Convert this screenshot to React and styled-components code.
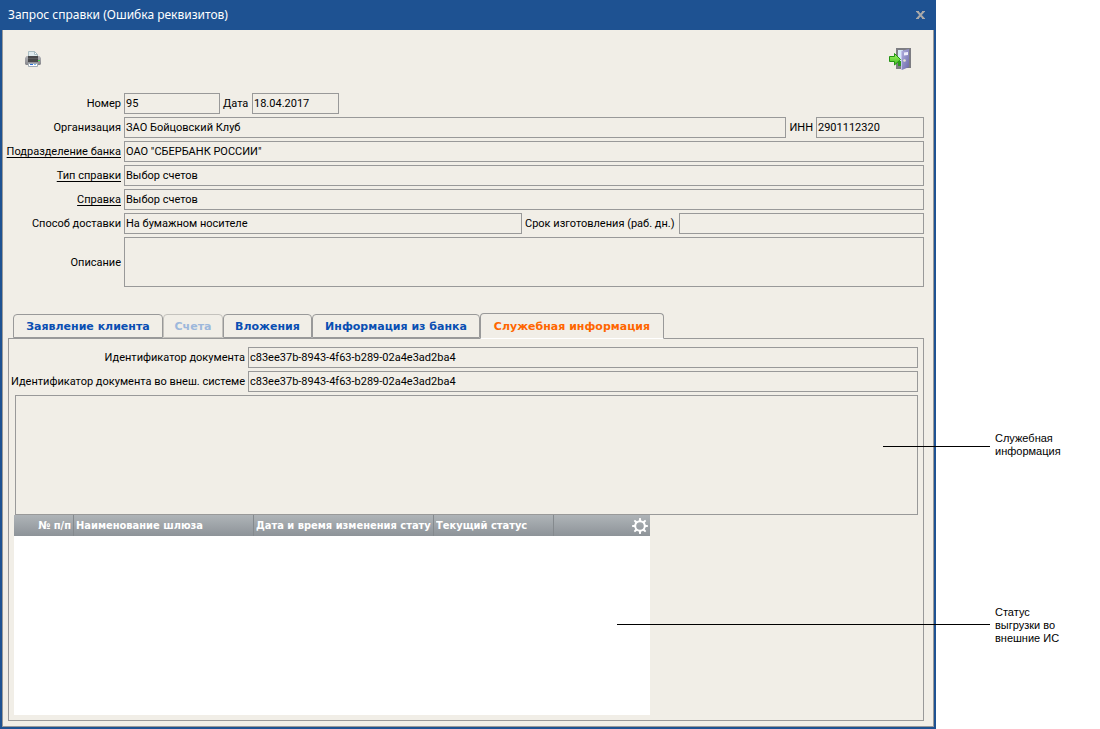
import React, { useState } from 'react';
import styled, { createGlobalStyle } from 'styled-components';

const tabs = [
  { id: 'claim', title: 'Заявление клиента', width: 150 },
  { id: 'accounts', title: 'Счета', width: 60, disabled: true },
  { id: 'files', title: 'Вложения', width: 89 },
  { id: 'bank', title: 'Информация из банка', width: 168 },
  { id: 'service', title: 'Служебная информация', width: 184 },
];

const columns = [
  { title: '№ п/п', width: 60, align: 'right' },
  { title: 'Наименование шлюза', width: 180 },
  { title: 'Дата и время изменения статуса', width: 180 },
  { title: 'Текущий статус', width: 120 },
];

function PrinterIcon() {
  return (
    <svg width="16" height="16" viewBox="0 0 16 16" aria-hidden="true">
      <defs>
        <linearGradient id="printerBody" x1="0" y1="0" x2="0" y2="1">
          <stop offset="0" stopColor="#b4b4b8" />
          <stop offset="1" stopColor="#85858a" />
        </linearGradient>
      </defs>
      <path d="M3.5 6V.5h6l3 3V6z" fill="#dfeaee" stroke="#a9bcc2" />
      <path d="M9.5.5v3h3z" fill="#fff" stroke="#a9bcc2" />
      <path d="M1.5 5h13L16 7v6l-1 1H1l-1-1V7z" fill="url(#printerBody)" />
      <path d="M3 5h10v6H3z" fill="#48484b" />
      <path d="M3 7h10v1H3z" fill="#5d5d60" />
      <path d="M13 9h2v1h-2z" fill="#35e03b" />
      <path d="M3.500 12.500h9v3h-9z" fill="#fff" stroke="#a3adb5" />
      <path d="M5 13h3v1H5z" fill="#2e6fd8" />
      <path d="M9 13h2v1H9z" fill="#7db4ef" />
    </svg>
  );
}

function ExitIcon() {
  return (
    <svg width="22" height="22" viewBox="0 0 22 22" aria-hidden="true">
      <defs>
        <linearGradient id="doorLeaf" x1="0" y1="0" x2="1" y2="1">
          <stop offset="0" stopColor="#b3b2e2" />
          <stop offset="1" stopColor="#6c6aa8" />
        </linearGradient>
        <linearGradient id="arrowFill" x1="0" y1="0" x2="0" y2="1">
          <stop offset="0" stopColor="#a4f569" />
          <stop offset="1" stopColor="#3fc01c" />
        </linearGradient>
      </defs>
      <path d="M7 0h15v20h-8v1H7z" fill="#7d7d82" />
      <path d="M9 2h5v16H9z" fill="#d6eaf8" />
      <path d="M9 13h4v5H9z" fill="#2c9a1c" />
      <path d="M12 3l8-2v18l-7 3-1-1z" fill="url(#doorLeaf)" />
      <path d="M12.500 3v18.500" stroke="#c3c2ea" />
      <path d="M15 4.500l4-.5v3l-4 .5z" fill="#eeeefb" />
      <circle cx="15.500" cy="12.500" r="1.300" fill="#e9e6d2" />
      <path d="M.5 8.500h5v-3l6 6-6 5.500v-3.500h-5z" fill="url(#arrowFill)" stroke="#239313" />
    </svg>
  );
}

function GearIcon() {
  return (
    <svg width="16" height="16" viewBox="0 0 16 16" aria-hidden="true">
      <circle cx="8" cy="8" r="4.800" fill="none" stroke="#fff" strokeWidth="2" />
      {[0, 45, 90, 135, 180, 225, 270, 315].map((angle) => (
        <path key={angle} d="M6.800 3L7.200 0h1.600l.4 3z" fill="#fff" transform={`rotate(${angle} 8 8)`} />
      ))}
    </svg>
  );
}

function App() {
  const [activeTab, setActiveTab] = useState('service');

  return (
    <>
      <GlobalStyle />
      <Page>
        <Dialog>
          <TitleBar>
            <Title>Запрос справки (Ошибка реквизитов)</Title>
            <CloseBtn type="button" aria-label="Закрыть">
              <svg width="9" height="8" viewBox="0 0 9 8" aria-hidden="true">
                <path d="M1 0l7 8M8 0L1 8" stroke="#a9a9a9" strokeWidth="2" />
                <path d="M0 .5h3M6 .5h3M0 7.500h3M6 7.500h3" stroke="#a9a9a9" />
              </svg>
            </CloseBtn>
          </TitleBar>
          <Body>
            <Toolbar>
              <IconBtn type="button" aria-label="Печать">
                <PrinterIcon />
              </IconBtn>
              <IconBtn type="button" aria-label="Выход">
                <ExitIcon />
              </IconBtn>
            </Toolbar>

            <Form>
              <Row>
                <Label htmlFor="number">Номер</Label>
                <Field id="number" $width={96} defaultValue="95" readOnly />
                <InlineLabel htmlFor="date" $width={26}>Дата</InlineLabel>
                <Field id="date" $width={87} defaultValue="18.04.2017" readOnly />
              </Row>
              <Row>
                <Label htmlFor="org">Организация</Label>
                <Field id="org" defaultValue="ЗАО Бойцовский Клуб" readOnly />
                <InlineLabel htmlFor="inn">ИНН</InlineLabel>
                <Field id="inn" $width={108} defaultValue="2901112320" readOnly />
              </Row>
              <Row>
                <LinkLabel id="branchLabel" href="#branch">Подразделение банка</LinkLabel>
                <Field id="branch" aria-labelledby="branchLabel" defaultValue={'ОАО "СБЕРБАНК РОССИИ"'} readOnly />
              </Row>
              <Row>
                <LinkLabel id="typeLabel" href="#type">Тип справки</LinkLabel>
                <Field id="type" aria-labelledby="typeLabel" defaultValue="Выбор счетов" readOnly />
              </Row>
              <Row>
                <LinkLabel id="certLabel" href="#cert">Справка</LinkLabel>
                <Field id="cert" aria-labelledby="certLabel" defaultValue="Выбор счетов" readOnly />
              </Row>
              <Row>
                <Label htmlFor="delivery">Способ доставки</Label>
                <Field id="delivery" defaultValue="На бумажном носителе" readOnly />
                <InlineLabel htmlFor="term" $width={151}>Срок изготовления (раб. дн.)</InlineLabel>
                <Field id="term" $width={245} readOnly />
              </Row>
              <Row>
                <Label htmlFor="description">Описание</Label>
                <TextArea id="description" $height={50} readOnly />
              </Row>
            </Form>

            <TabList role="tablist">
              {tabs.map((tab) => (
                <Tab
                  key={tab.id}
                  type="button"
                  role="tab"
                  aria-selected={activeTab === tab.id}
                  disabled={tab.disabled}
                  $active={activeTab === tab.id}
                  $width={tab.width}
                  onClick={() => setActiveTab(tab.id)}
                >
                  {tab.title}
                </Tab>
              ))}
            </TabList>

            <Panel role="tabpanel">
              <Row>
                <Label htmlFor="docId" $width={232}>Идентификатор документа</Label>
                <Field id="docId" defaultValue="c83ee37b-8943-4f63-b289-02a4e3ad2ba4" readOnly />
              </Row>
              <Row>
                <Label htmlFor="extId" $width={232}>Идентификатор документа во внеш. системе</Label>
                <Field id="extId" defaultValue="c83ee37b-8943-4f63-b289-02a4e3ad2ba4" readOnly />
              </Row>
              <ServiceRow>
                <TextArea aria-label="Служебная информация" $height={120} readOnly />
              </ServiceRow>
              <TableBox>
                <Table>
                  <thead>
                    <tr>
                      {columns.map((col) => (
                        <HeadCell key={col.title} $width={col.width} $align={col.align}>
                          <HeadText>{col.title}</HeadText>
                        </HeadCell>
                      ))}
                      <GearCell>
                        <GearBtn type="button" aria-label="Настройки">
                          <GearIcon />
                        </GearBtn>
                      </GearCell>
                    </tr>
                  </thead>
                  <tbody />
                </Table>
              </TableBox>
            </Panel>
          </Body>
        </Dialog>

        <Notes>
          <Note $line={107} $top={14}>
            Служебная
            <br />
            информация
          </Note>
          <Note $line={373} $top={18}>
            Статус
            <br />
            выгрузки во
            <br />
            внешние ИС
          </Note>
        </Notes>
      </Page>
    </>
  );
}

export default App;

const GlobalStyle = createGlobalStyle`
  * {
    box-sizing: border-box;
  }

  body {
    margin: 0;
    background: #fff;
    color: #000;
    font: 11px/13px Roboto, 'Liberation Sans', sans-serif;
  }

  button, input, textarea {
    font: inherit;
    color: inherit;
  }
`;

const Page = styled.div`
  display: grid;
  grid-template-columns: minmax(0, 1fr) 164px;
  min-height: 100vh;
`;

const Dialog = styled.section`
  display: flex;
  flex-direction: column;
  border: 2px solid #1e5292;
  border-top: 0;
`;

const TitleBar = styled.header`
  display: flex;
  align-items: center;
  justify-content: space-between;
  height: 30px;
  padding: 0 8px 0 6px;
  background: #1e5292;
`;

const Title = styled.h1`
  margin: 0;
  color: #fff;
  font-family: 'Noto Sans', sans-serif;
  font-size: 12px;
  font-weight: 400;
  line-height: 18px;
`;

const CloseBtn = styled.button`
  display: flex;
  padding: 0 1px;
  border: 0;
  background: none;
  cursor: pointer;
`;

const Body = styled.div`
  display: flex;
  flex: 1;
  flex-direction: column;
  padding: 0 9px 5px 5px;
  border: 1px solid #999;
  border-top: 0;
  background: #f1eee7;
`;

const Toolbar = styled.div`
  display: flex;
  align-items: center;
  justify-content: space-between;
  height: 58px;
  padding: 0 13px 0 17px;
`;

const IconBtn = styled.button`
  display: flex;
  padding: 0;
  border: 0;
  background: none;
  cursor: pointer;
`;

const Form = styled.form`
  display: flex;
  flex-direction: column;
  gap: 3px;
  padding-top: 5px;
`;

const Row = styled.div`
  display: flex;
  align-items: center;
  gap: 3px;
`;

const Label = styled.label`
  display: flex;
  flex: none;
  justify-content: flex-end;
  width: ${(props) => props.$width || 113}px;
  white-space: nowrap;
`;

const LinkLabel = styled.a`
  display: flex;
  flex: none;
  justify-content: flex-end;
  width: 113px;
  color: inherit;
  text-underline-offset: 2px;
  white-space: nowrap;
`;

const InlineLabel = styled.label`
  flex: none;
  min-width: ${(props) => props.$width || 21}px;
  white-space: nowrap;
`;

const Field = styled.input`
  flex: ${(props) => (props.$width ? 'none' : '1')};
  width: ${(props) => (props.$width ? `${props.$width}px` : 'auto')};
  min-width: 0;
  height: 21px;
  padding: 0 1px;
  border: 1px solid #999;
  border-radius: 0;
  outline: none;
  background: transparent;
`;

const TextArea = styled.textarea`
  display: block;
  flex: 1;
  min-width: 0;
  height: ${(props) => props.$height}px;
  padding: 2px;
  border: 1px solid #999;
  border-radius: 0;
  outline: none;
  background: transparent;
  resize: none;
`;

const TabList = styled.div`
  display: flex;
  align-items: flex-end;
  height: 26px;
  margin: 26px 0 -1px;
  padding-left: 5px;
`;

const Tab = styled.button`
  flex: none;
  width: ${(props) => props.$width}px;
  height: ${(props) => (props.$active ? 26 : 24)}px;
  margin-bottom: ${(props) => (props.$active ? 0 : 1)}px;
  padding: 0;
  position: relative;
  border: 1px solid #999;
  border-bottom-color: ${(props) => (props.$active ? '#fff' : '#999')};
  border-radius: 4px 4px 0 0;
  background: #f1eee7;
  color: ${(props) => (props.$active ? '#ff6600' : '#0a4fb3')};
  font-family: 'DejaVu Sans', sans-serif;
  font-weight: 700;
  white-space: nowrap;
  cursor: pointer;

  &:disabled {
    border-color: #c4c2bd;
    color: #9db8dc;
    cursor: default;
  }
`;

const Panel = styled.div`
  display: flex;
  flex: 1;
  flex-direction: column;
  gap: 3px;
  padding: 8px 5px 5px 4px;
  border: 1px solid #999;
`;

const ServiceRow = styled.div`
  display: flex;
  margin: 0 0 -3px 2px;
`;

const TableBox = styled.div`
  flex: 1;
  width: 636px;
  max-width: 100%;
  min-height: 200px;
  margin-left: 1px;
  background: #fff;
`;

const Table = styled.table`
  width: 100%;
  border-collapse: separate;
  border-spacing: 0;
  table-layout: fixed;
  background: linear-gradient(#afb4b8, #8d9398);
  color: #fff;
  font-family: 'DejaVu Sans Condensed', 'DejaVu Sans', sans-serif;
`;

const HeadCell = styled.th`
  width: ${(props) => props.$width}px;
  height: 21px;
  padding: 0 2px;
  border-right: 1px solid #858a8e;
  text-align: ${(props) => props.$align || 'left'};
`;

const HeadText = styled.div`
  overflow: hidden;
  white-space: nowrap;
`;

const GearCell = styled.th`
  height: 21px;
  padding: 0;
`;

const GearBtn = styled.button`
  display: flex;
  margin-left: auto;
  padding: 2px;
  border: 0;
  background: none;
  cursor: pointer;
`;

const Notes = styled.aside`
  display: flex;
  flex-direction: column;
  gap: 148px;
  padding: 432px 0 0 59px;
  font-family: 'Liberation Sans', Arial, sans-serif;
`;

const Note = styled.p`
  position: relative;
  margin: 0;

  /* leader line to the part of the dialog that the note explains */
  &::before {
    content: '';
    position: absolute;
    top: ${(props) => props.$top}px;
    right: 100%;
    width: ${(props) => props.$line}px;
    margin-right: 5px;
    border-top: 1px solid #000;
  }
`;
